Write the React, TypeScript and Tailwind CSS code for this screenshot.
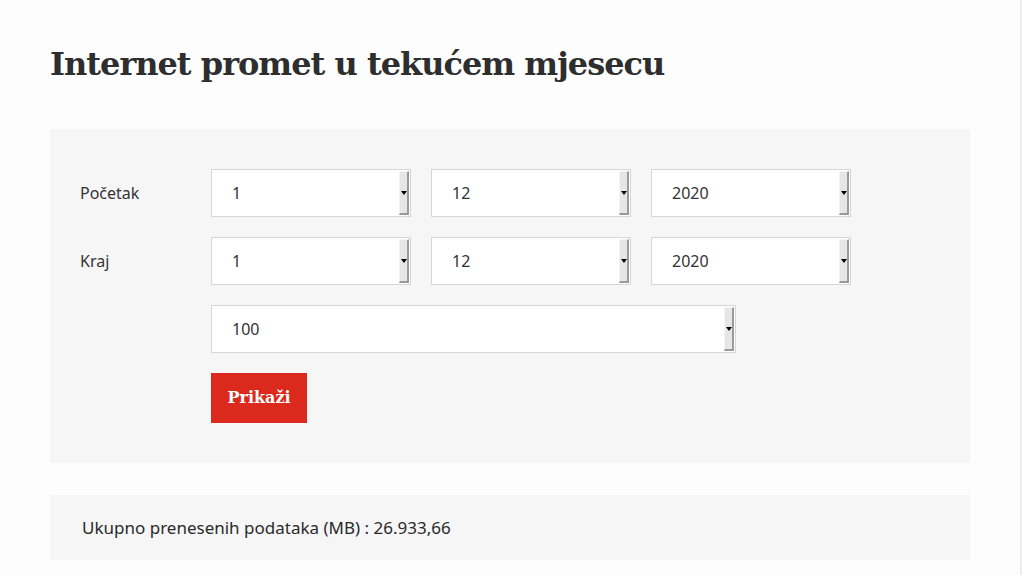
import React from "react";

const slab = { fontFamily: '"DejaVu Serif", "Liberation Serif", serif' };

function Select({ value, width }: { value: string; width: string }) {
  return (
    <div className={`relative h-[48px] ${width} border border-[#d6d6d6] bg-white flex items-center`}>
      <span className="pl-[20px] text-[16px] text-[#333]">{value}</span>
      <div className="absolute right-[1px] top-[1px] bottom-[1px] w-[10px] bg-[#e6e6e6] border-t border-l border-t-[#f4f4f4] border-l-[#f4f4f4] border-r-2 border-b-2 border-r-[#9a9a9a] border-b-[#9a9a9a] flex items-center justify-center">
        <div className="w-0 h-0 border-l-[3px] border-r-[3px] border-t-[4px] border-l-transparent border-r-transparent border-t-black" />
      </div>
    </div>
  );
}

export default function App() {
  return (
    <div className="w-[1022px] h-[575px] bg-[#fdfdfd] flex overflow-hidden" style={{ fontFamily: '"Noto Sans", "Open Sans", sans-serif' }}>
      <div className="flex-1 px-[50px]">
        <h1 className="pt-[39px] h-[129px] text-[32px] leading-[50px] font-bold text-[#2e2e2e] tracking-[-1px]" style={slab}>
          Internet promet u tekućem mjesecu
        </h1>

        <div className="w-[920px] bg-[#f6f6f6] pt-[40px] pb-[40px] pl-[30px] flex flex-col gap-[20px]">
          <div className="flex items-center">
            <div className="w-[131px] text-[16px] text-[#333]">Početak</div>
            <div className="flex gap-[20px]">
              <Select value="1" width="w-[200px]" />
              <Select value="12" width="w-[200px]" />
              <Select value="2020" width="w-[200px]" />
            </div>
          </div>
          <div className="flex items-center">
            <div className="w-[131px] text-[16px] text-[#333]">Kraj</div>
            <div className="flex gap-[20px]">
              <Select value="1" width="w-[200px]" />
              <Select value="12" width="w-[200px]" />
              <Select value="2020" width="w-[200px]" />
            </div>
          </div>
          <div className="flex items-center">
            <div className="w-[131px]" />
            <Select value="100" width="w-[525px]" />
          </div>
          <div className="flex items-center">
            <div className="w-[131px]" />
            <button className="w-[96px] h-[50px] bg-[#dc291e] text-white text-[16px] font-bold" style={slab}>
              Prikaži
            </button>
          </div>
        </div>

        <div className="mt-[32px] w-[920px] h-[65px] bg-[#f6f6f6] px-[32px] flex items-center text-[17px] text-[#2a2a2a]">
          Ukupno prenesenih podataka (MB) : 26.933,66
        </div>
      </div>
      <div className="w-[2px] bg-[#ececec]" />
    </div>
  );
}
